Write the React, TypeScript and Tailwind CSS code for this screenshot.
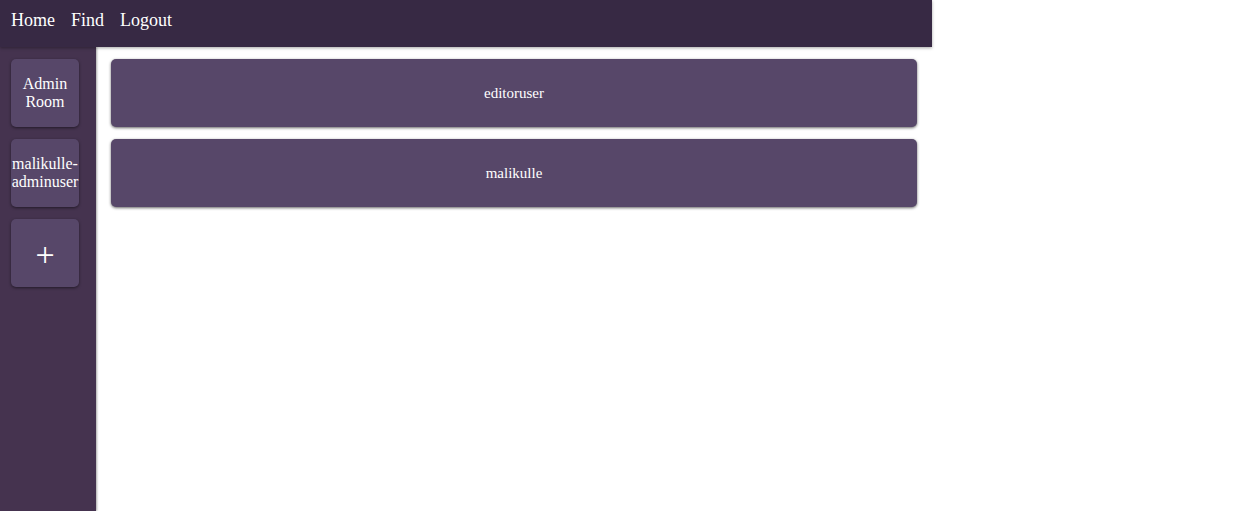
export default function App() {
  const rooms = [
    { id: "admin", lines: ["Admin", "Room"] },
    { id: "malikulle-adminuser", lines: ["malikulle-", "adminuser"] },
  ];
  const users = ["editoruser", "malikulle"];

  return (
    <div className="flex h-[511px] w-full flex-col bg-white font-[Liberation_Serif,serif] text-white">
      <nav className="z-10 flex h-[47px] w-[932px] shrink-0 items-center gap-4 bg-[#372944] px-[11px] pb-[6px] text-[18px] shadow-[0_1px_3px_rgba(0,0,0,0.35)]">
        <span>Home</span>
        <span>Find</span>
        <span>Logout</span>
      </nav>
      <div className="flex min-h-0 flex-1">
        <aside className="flex w-[96px] shrink-0 flex-col gap-3 bg-[#45334f] px-[11px] pt-3 shadow-[1px_0_2px_rgba(0,0,0,0.35)]">
          {rooms.map((r) => (
            <div
              key={r.id}
              className="flex h-[68px] w-[68px] flex-col items-center justify-center rounded-[5px] bg-[#574769] text-center text-[16px] leading-[18px] shadow-[0_1px_3px_rgba(0,0,0,0.5)]"
            >
              {r.lines.map((l) => (
                <span key={l}>{l}</span>
              ))}
            </div>
          ))}
          <div className="flex h-[68px] w-[68px] items-center justify-center rounded-[5px] bg-[#574769] pt-1 text-[34px] leading-none shadow-[0_1px_3px_rgba(0,0,0,0.5)]">
            +
          </div>
        </aside>
        <main className="flex w-[836px] flex-col gap-3 px-[15px] pt-3">
          {users.map((u) => (
            <div
              key={u}
              className="flex h-[68px] items-center justify-center rounded-[5px] bg-[#574769] text-[15px] shadow-[0_1px_3px_rgba(0,0,0,0.6)]"
            >
              {u}
            </div>
          ))}
        </main>
      </div>
    </div>
  );
}
